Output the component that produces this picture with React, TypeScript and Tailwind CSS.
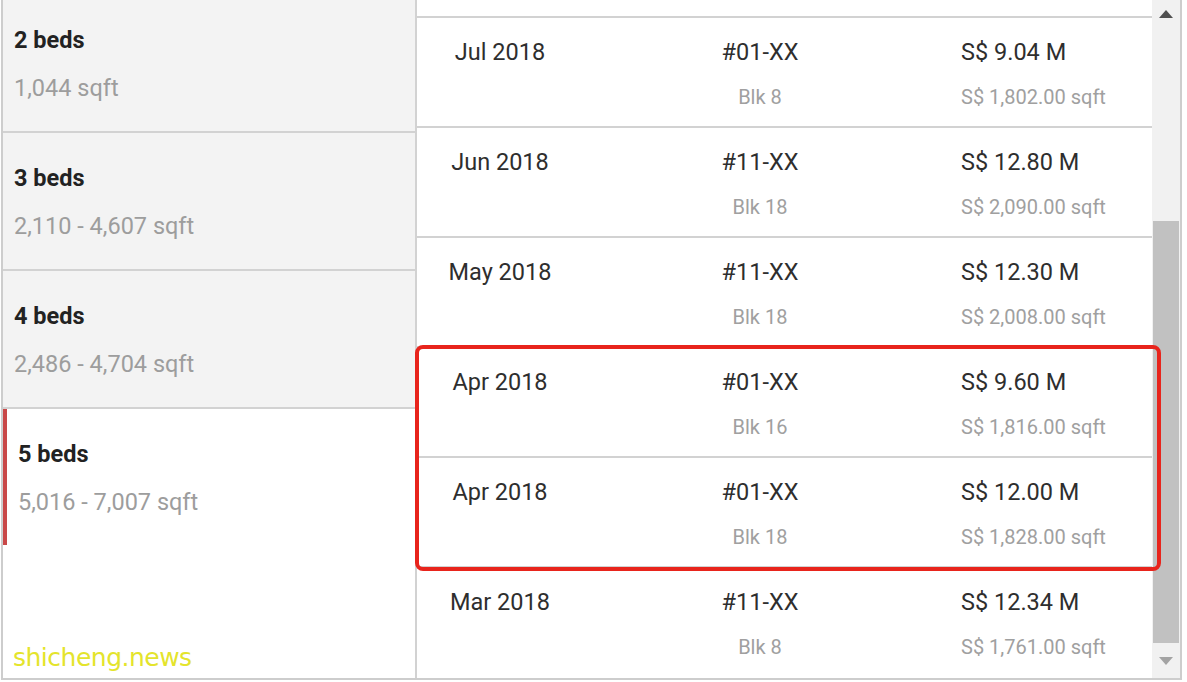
import React from 'react';

interface BedRow {
  beds: string;
  size: string;
  active?: boolean;
}

interface Sale {
  date: string;
  unit: string;
  blk: string;
  price: string;
  psf: string;
}

const bedRows: BedRow[] = [
  { beds: '2 beds', size: '1,044 sqft' },
  { beds: '3 beds', size: '2,110 - 4,607 sqft' },
  { beds: '4 beds', size: '2,486 - 4,704 sqft' },
  { beds: '5 beds', size: '5,016 - 7,007 sqft', active: true },
];

const sales: Sale[] = [
  { date: 'Jul 2018', unit: '#01-XX', blk: 'Blk 8', price: 'S$ 9.04 M', psf: 'S$ 1,802.00 sqft' },
  { date: 'Jun 2018', unit: '#11-XX', blk: 'Blk 18', price: 'S$ 12.80 M', psf: 'S$ 2,090.00 sqft' },
  { date: 'May 2018', unit: '#11-XX', blk: 'Blk 18', price: 'S$ 12.30 M', psf: 'S$ 2,008.00 sqft' },
  { date: 'Apr 2018', unit: '#01-XX', blk: 'Blk 16', price: 'S$ 9.60 M', psf: 'S$ 1,816.00 sqft' },
  { date: 'Apr 2018', unit: '#01-XX', blk: 'Blk 18', price: 'S$ 12.00 M', psf: 'S$ 1,828.00 sqft' },
  { date: 'Mar 2018', unit: '#11-XX', blk: 'Blk 8', price: 'S$ 12.34 M', psf: 'S$ 1,761.00 sqft' },
];

function BedItem({ row }: { row: BedRow }) {
  return (
    <div
      className={
        row.active
          ? 'flex h-[136px] bg-white'
          : 'flex h-[138px] bg-[#f3f3f3] border-b-2 border-[#d2d2d2]'
      }
    >
      {row.active ? <div className="w-[4px] h-full bg-[#c94848]" /> : null}
      <div className="pl-[11px] pt-[31px]">
        <div className="text-[23.5px] leading-[28px] font-bold text-[#222]">{row.beds}</div>
        <div className="mt-[20px] text-[23.5px] leading-[28px] text-[#9d9d9d]">{row.size}</div>
      </div>
    </div>
  );
}

function SaleRow({ sale, last }: { sale: Sale; last: boolean }) {
  return (
    <div
      className={
        last
          ? 'grid grid-cols-[166px_354px_1fr] h-[110px]'
          : 'grid grid-cols-[166px_354px_1fr] h-[110px] border-b-2 border-[#d2d2d2]'
      }
    >
      <div className="pt-[20px] text-center text-[23.5px] leading-[28px] text-[#2e2e2e]">
        {sale.date}
      </div>
      <div className="pt-[20px] text-center">
        <div className="text-[23.5px] leading-[28px] text-[#2e2e2e]">{sale.unit}</div>
        <div className="mt-[19px] text-[20px] leading-[24px] text-[#a0a0a0]">{sale.blk}</div>
      </div>
      <div className="pt-[20px] pl-6">
        <div className="text-[23.5px] leading-[28px] text-[#2e2e2e]">{sale.price}</div>
        <div className="mt-[19px] text-[20px] leading-[24px] text-[#a0a0a0]">{sale.psf}</div>
      </div>
    </div>
  );
}

function Scrollbar() {
  return (
    <div className="w-[28px] flex flex-col bg-[#f1f1f1]">
      <div className="h-[28px] flex items-center justify-center">
        <svg width="14" height="8" viewBox="0 0 14 8">
          <polygon points="7,0 14,8 0,8" fill="#505050" />
        </svg>
      </div>
      <div className="h-[193px]" />
      <div className="h-[422px] mx-[1px] bg-[#c1c1c1]" />
      <div className="flex-1 flex items-center justify-center">
        <svg width="14" height="8" viewBox="0 0 14 8">
          <polygon points="0,0 14,0 7,8" fill="#a3a3a3" />
        </svg>
      </div>
    </div>
  );
}

export default function App() {
  return (
    <div className="relative w-[1187px] h-[682px] bg-white overflow-hidden font-[Roboto,sans-serif]">
      <div className="ml-[1px] w-[1181px] h-[680px] flex border-l-2 border-r-2 border-b-2 border-[#cdcdcd]">
        <div className="w-[414px] h-full border-r-2 border-[#d2d2d2] overflow-hidden">
          <div className="-mt-[5px]">
            {bedRows.map((row) => (
              <BedItem key={row.beds} row={row} />
            ))}
          </div>
        </div>
        <div className="flex-1 h-full overflow-hidden">
          <div className="h-[18px] border-b-2 border-[#d2d2d2]" />
          {sales.map((sale, i) => (
            <SaleRow key={`sale-${i}`} sale={sale} last={i === sales.length - 1} />
          ))}
        </div>
        <Scrollbar />
      </div>

      {/* annotation box */}
      <div className="absolute left-[415px] top-[345px] w-[746px] h-[226px] border-4 border-[#e8241c] rounded-[8px]" />

      {/* watermark */}
      <div className="absolute left-[13px] top-[643px] text-[25px] leading-[30px] tracking-[-0.5px] text-[#e4e42c] font-['DejaVu_Sans',sans-serif] [text-shadow:0_0_1px_#fff]">
        shicheng.news
      </div>
    </div>
  );
}
